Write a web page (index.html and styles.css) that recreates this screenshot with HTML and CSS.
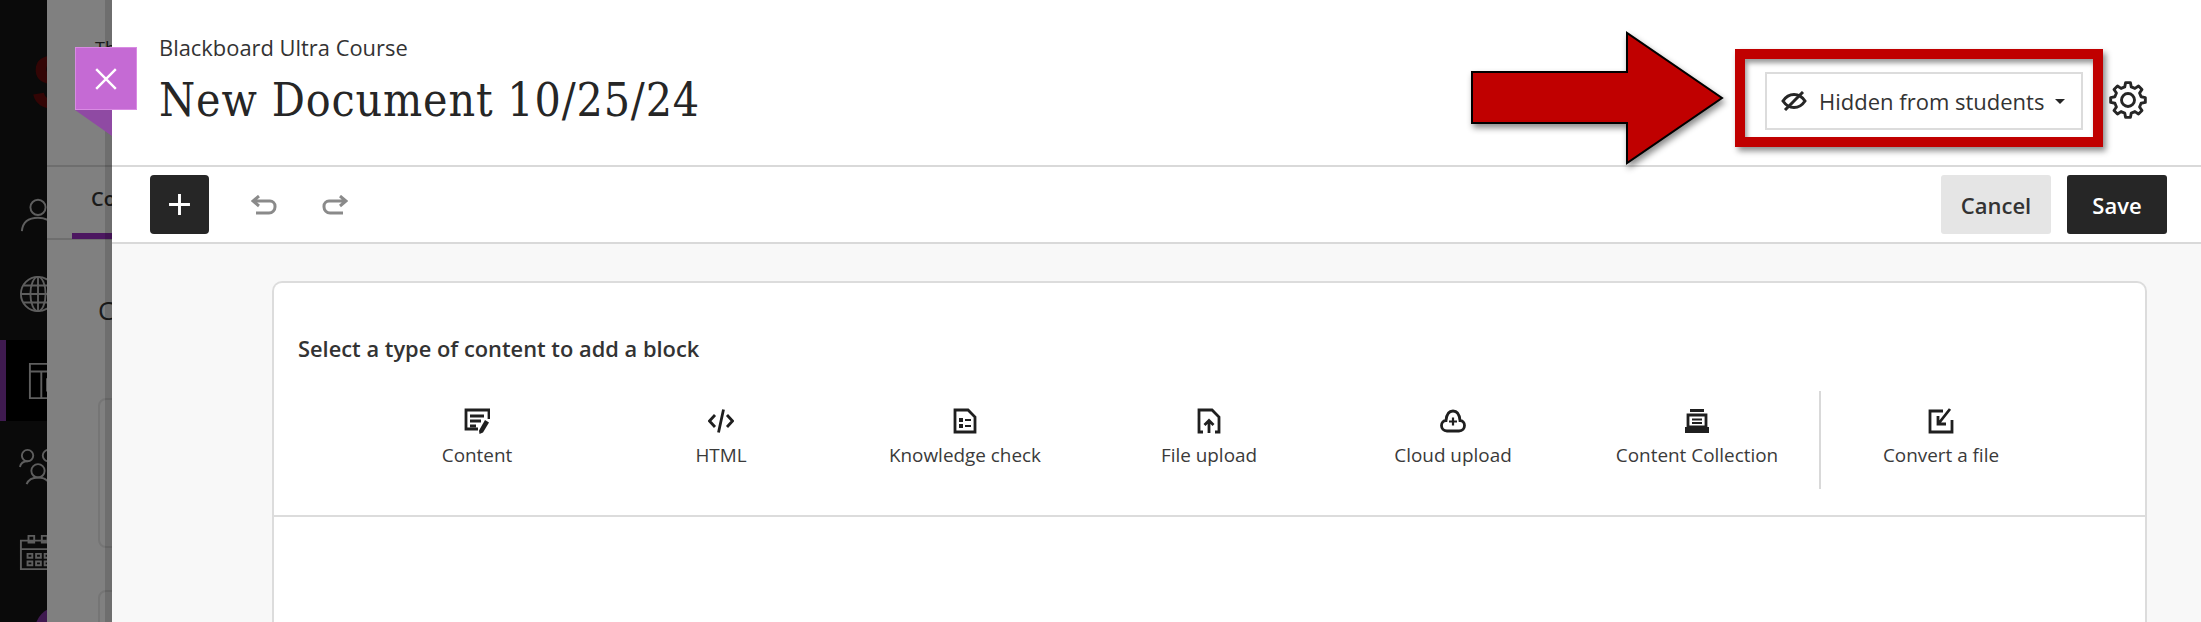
FILE: index.html
```html
<!DOCTYPE html>
<html lang="en">
<head>
<meta charset="utf-8">
<title>New Document 10/25/24</title>
<link rel="stylesheet" href="styles.css">
</head>
<body>
<div class="page">
  <aside class="rail">
    <span class="rail-logo">S</span>
    <svg class="rail-icon rail-person" viewBox="0 0 40 40"><circle cx="20" cy="13" r="8"/><path d="M3 38c1-10 8-14 17-14s16 4 17 14"/></svg>
    <svg class="rail-icon rail-globe" viewBox="0 0 40 40"><circle cx="20" cy="20" r="18"/><ellipse cx="20" cy="20" rx="8" ry="18"/><path d="M2 20h36M5 11h30M5 29h30M20 2v36"/></svg>
    <div class="rail-active">
      <svg class="rail-icon" viewBox="0 0 40 40"><path d="M2 2h36v36H2zM2 10h36M14 10v28M20 18h14v12H20z"/></svg>
    </div>
    <svg class="rail-icon rail-group" viewBox="0 0 40 40"><circle cx="9" cy="8" r="6"/><circle cx="31" cy="8" r="6"/><circle cx="20" cy="24" r="7"/><path d="M1 20c1-5 4-6 8-6M39 20c-1-5-4-6-8-6M8 38c2-5 6-7 12-7s10 2 12 7"/></svg>
    <svg class="rail-icon rail-cal" viewBox="0 0 40 40"><path d="M2 8h36v30H2zM2 17h36M10 3h6v7h-6zM24 3h6v7h-6zM9 22h5v4H9zM18 22h5v4h-5zM27 22h5v4h-5zM9 30h5v4H9zM18 30h5v4h-5zM27 30h5v4h-5z"/></svg>
    <span class="rail-avatar"></span>
  </aside>

  <div class="backdrop">
    <p class="back-crumb">Th</p>
    <div class="back-head">
      <span class="back-tab">Co</span>
    </div>
    <p class="back-title">C</p>
    <div class="back-card"></div>
    <div class="back-card"></div>
    <span class="backdrop-edge"></span>
  </div>

  <main class="panel">
    <header class="panel-head">
      <div class="titles">
        <p class="course">Blackboard Ultra Course</p>
        <h1 class="doc-title">New Document 10/25/24</h1>
      </div>
      <div class="head-actions">
        <button class="visibility" type="button">
          <svg class="eye" viewBox="0 0 26 20"><path d="M2 10c3-4.500 7-6.500 11-6.500S21 5.500 24 10c-3 4.500-7 6.500-11 6.500S5 14.500 2 10z"/><path d="M4 19L22 1"/></svg>
          <span>Hidden from students</span>
          <span class="caret"></span>
        </button>
        <svg class="gear" viewBox="0 0 38 38"><g transform="translate(19 19)"><polygon points="-3.27,-13.1 -2.44,-17.33 2.44,-17.33 3.27,-13.1 6.95,-11.58 10.53,-13.98 13.98,-10.53 11.58,-6.95 13.1,-3.27 17.33,-2.44 17.33,2.44 13.1,3.27 11.58,6.95 13.98,10.53 10.53,13.98 6.95,11.58 3.27,13.1 2.44,17.33 -2.44,17.33 -3.27,13.1 -6.95,11.58 -10.53,13.98 -13.98,10.53 -11.58,6.95 -13.1,3.27 -17.33,2.44 -17.33,-2.44 -13.1,-3.27 -11.58,-6.95 -13.98,-10.53 -10.53,-13.98 -6.95,-11.58"/><circle r="6.500"/></g></svg>
      </div>
    </header>

    <div class="toolbar">
      <div class="tools">
        <button class="add" type="button"><svg viewBox="0 0 22 22"><path d="M11 1v20M1 11h20"/></svg></button>
        <svg class="history" viewBox="0 0 26 20"><path d="M8 1L2 6l6 5M2 6h17a5 5 0 0 1 5 5v1a6 6 0 0 1-6 6H5"/></svg>
        <svg class="history" viewBox="0 0 26 20"><path d="M18 1l6 5-6 5M24 6H7a5 5 0 0 0-5 5v1a6 6 0 0 0 6 6h13"/></svg>
      </div>
      <div class="tools-right">
        <button class="btn btn-cancel" type="button">Cancel</button>
        <button class="btn btn-save" type="button">Save</button>
      </div>
    </div>

    <div class="canvas">
      <section class="card">
        <div class="picker">
          <h2 class="picker-title">Select a type of content to add a block</h2>
          <div class="blocks">
            <div class="block">
              <svg class="block-icon" viewBox="0 0 26 26"><path class="ink" d="M14 21H2V2h23v9"/><path class="ink" d="M6 8h14M6 13h11M6 18h6"/><path class="fill" d="M21 12l4 2.500-6 10-3.500 1.500-.5-3.500z"/></svg>
              <span class="block-label">Content</span>
            </div>
            <div class="block">
              <svg class="block-icon" viewBox="0 0 26 26"><path class="ink" d="M7 7l-5.500 6L7 19M19 7l5.500 6L19 19M15.500 1.500l-5 23"/></svg>
              <span class="block-label">HTML</span>
            </div>
            <div class="block">
              <svg class="block-icon" viewBox="0 0 26 26"><path class="ink" d="M3 2h13l7 7v15H3z"/><path class="fill" d="M7 10h4v4H7zM7 16h4v4H7z"/><path class="ink-thin" d="M13 12h6M13 18h6"/></svg>
              <span class="block-label">Knowledge check</span>
            </div>
            <div class="block">
              <svg class="block-icon" viewBox="0 0 26 26"><path class="ink" d="M7 24H3V2h13l7 7v15h-4"/><path class="ink" d="M13 25V13M8.500 17l4.500-4.500 4.500 4.500"/></svg>
              <span class="block-label">File upload</span>
            </div>
            <div class="block">
              <svg class="block-icon" viewBox="0 0 26 26"><path class="ink" d="M7 23c-3.500 0-5.500-2.500-5.500-5.500S3.500 12.500 6 12.500C6.500 7 9 3 13 3s6.500 4 7 9.500c2.500 0 4.500 2 4.500 5s-2 5.500-5.500 5.500z"/><path class="ink-thin" d="M13 9.500v8M9 13.500h8"/></svg>
              <span class="block-label">Cloud upload</span>
            </div>
            <div class="block">
              <svg class="block-icon" viewBox="0 0 26 26"><path class="ink" d="M6 2.500h14M4 7h18v12H4z"/><path class="ink-thin" d="M8 11.500h10M8 15h10"/><path class="fill" d="M1 19h24v6H1z"/></svg>
              <span class="block-label">Content Collection</span>
            </div>
            <div class="block block-split">
              <svg class="block-icon" viewBox="0 0 26 26"><path class="ink" d="M15 3H2v21h22V12"/><path class="ink" d="M22 1L11 15M10 8v8h8"/></svg>
              <span class="block-label">Convert a file</span>
            </div>
          </div>
        </div>
      </section>
    </div>
  </main>

  <button class="close" type="button" aria-label="Close"><svg viewBox="0 0 22 22"><path d="M2 2l18 18M20 2L2 20"/></svg></button>
  <span class="close-fold"></span>

  <div class="callout-box"></div>
  <svg class="callout-arrow" viewBox="0 0 270 150"><polygon points="6,44 161,44 161,5 256,70 161,135 161,95 6,95"/></svg>
</div>
</body>
</html>
```
FILE: styles.css
```css
* { box-sizing: border-box; }
html, body { margin: 0; padding: 0; }
body { font-family: "Open Sans", "Noto Sans", sans-serif; color: #262626; background: #fff; }
p, h1, h2 { margin: 0; }
button { font-family: inherit; cursor: pointer; }

.page { position: relative; display: flex; width: 2201px; height: 622px; overflow: hidden; }

/* dimmed course page behind the panel */
.rail { position: relative; flex: 0 0 47px; display: flex; flex-direction: column; padding-top: 195px; overflow: hidden; background: #0a0a0a; }
.rail-logo { position: absolute; left: 31px; top: 44px; font: 700 76px/76px "Liberation Sans", sans-serif; color: #330505; }
.rail-icon { flex: none; display: block; width: 38px; height: 38px; margin-left: 19px; fill: none; stroke: #5e5e5e; stroke-width: 2; }
.rail-globe { margin-top: 42px; }
.rail-active { flex: none; display: flex; align-items: center; height: 81px; margin-top: 27px; border-left: 6px solid #3f1a50; background: #000; }
.rail-active .rail-icon { margin-left: 22px; }
.rail-group { margin-top: 27px; }
.rail-cal { margin-top: 47px; }
.rail-avatar { flex: none; width: 46px; height: 46px; margin: 36px 0 0 35px; border-radius: 50%; background: #3f1a50; }

.backdrop { position: relative; flex: 0 0 65px; overflow: hidden; background: #808080; color: #1a1a1a; }
.back-crumb { position: absolute; left: 48px; top: 36px; font-size: 18px; line-height: 24px; }
.back-head { height: 240px; border-bottom: 2px solid #6e6e6e; }
.back-head::before { content: ""; position: absolute; left: 0; right: 0; top: 165px; height: 2px; background: #6e6e6e; }
.back-tab { position: absolute; left: 25px; top: 166px; display: block; width: 90px; height: 73px; padding: 19px 0 0 19px; border-bottom: 6px solid #4c1760; font-size: 20px; font-weight: 600; line-height: 28px; white-space: nowrap; }
.back-title { margin: 50px 0 0 51px; font-size: 26px; line-height: 40px; white-space: nowrap; }
.back-card { width: 200px; height: 150px; margin: 68px 0 0 51px; border: 2px solid #757575; border-radius: 8px; }
.back-card + .back-card { margin-top: 42px; }
.backdrop-edge { position: absolute; top: 0; right: 0; bottom: 0; width: 7px; background: rgba(0, 0, 0, .14); }

/* document panel */
.panel { flex: 1; display: flex; flex-direction: column; min-width: 0; background: #fff; }
.panel-head { flex: none; display: flex; align-items: flex-start; justify-content: space-between; height: 167px; padding: 34px 54px 0 47px; border-bottom: 2px solid #d9d9d9; }
.course { font-size: 21.900px; line-height: 27px; color: #333; }
.doc-title { margin-top: 11px; font-family: "DejaVu Serif", "Liberation Serif", serif; font-stretch: condensed; font-size: 46px; font-weight: 400; letter-spacing: .85px; line-height: 56px; color: #262626; white-space: nowrap; }
.head-actions { display: flex; align-items: flex-start; gap: 26px; }
.visibility { display: flex; align-items: center; width: 318px; height: 58px; margin-top: 38px; padding: 0 0 0 14px; border: 2px solid #dcdcdc; background: #fff; color: #333; font-size: 22px; }
.eye { flex: none; width: 26px; height: 20px; margin-right: 12px; fill: none; stroke: #262626; stroke-width: 3; }
.caret { flex: none; width: 0; height: 0; margin-left: 11px; border-style: solid; border-width: 5px 5px 0; border-color: #262626 transparent transparent; }
.gear { flex: none; width: 38px; height: 38px; margin-top: 47px; fill: none; stroke: #262626; stroke-width: 2.900; stroke-linejoin: round; overflow: visible; }

.toolbar { flex: none; display: flex; align-items: center; justify-content: space-between; height: 77px; padding: 0 34px 0 38px; border-bottom: 2px solid #d9d9d9; }
.tools { display: flex; align-items: center; }
.add { display: flex; align-items: center; justify-content: center; width: 59px; height: 59px; margin-right: 42px; padding: 0; border: 0; border-radius: 4px; background: #262626; }
.add svg { width: 23px; height: 23px; fill: none; stroke: #fff; stroke-width: 2.800; }
.history { width: 26px; height: 20px; margin-right: 45px; fill: none; stroke: #8a8a8a; stroke-width: 3; }
.tools-right { display: flex; gap: 16px; }
.btn { height: 59px; padding: 0; border: 0; border-radius: 3px; font-size: 22px; font-weight: 600; }
.btn-cancel { width: 110px; background: #e5e5e5; color: #333; }
.btn-save { width: 100px; background: #262626; color: #fff; }

.canvas { flex: 1; min-height: 0; overflow: hidden; padding: 37px 54px 0 160px; background: #f8f8f8; }
.card { height: 420px; border: 2px solid #dcdcdc; border-bottom: 0; border-radius: 10px 10px 0 0; background: #fff; }
.picker { height: 234px; padding: 52px 0 0 24px; border-bottom: 2px solid #dcdcdc; }
.picker-title { font-size: 21.850px; font-weight: 600; line-height: 28px; color: #333; }
.blocks { display: flex; height: 97px; margin: 29px 0 0 57px; }
.block { flex: 0 0 244px; display: flex; flex-direction: column; align-items: center; padding-top: 16px; }
.block-split { margin-top: -1px; padding: 17px 2px 0 0; border-left: 2px solid #d9d9d9; }
.block-icon { flex: none; width: 26px; height: 26px; }
.block-icon .ink { fill: none; stroke: #1f1f1f; stroke-width: 2.800; }
.block-icon .ink-thin { fill: none; stroke: #1f1f1f; stroke-width: 2.200; }
.block-icon .fill { fill: #1f1f1f; }
.block-label { margin-top: 9px; font-size: 18.900px; line-height: 24px; color: #3a3a3a; white-space: nowrap; }

/* overlays */
.close { position: absolute; left: 75px; top: 47px; display: flex; align-items: center; justify-content: center; width: 62px; height: 63px; padding: 0; border: 1px solid #d98be3; background: #c56ad4; }
.close svg { width: 24px; height: 24px; fill: none; stroke: #fff; stroke-width: 2.200; }
.close-fold { position: absolute; left: 75px; top: 110px; width: 37px; height: 26px; background: #8f4aa3; clip-path: polygon(0 0, 100% 0, 100% 100%); }
.callout-box { position: absolute; left: 1735px; top: 49px; width: 368px; height: 98px; border: 10px solid #c00000; box-shadow: 3px 4px 6px rgba(0, 0, 0, .45), inset 2px 4px 5px rgba(0, 0, 0, .4); pointer-events: none; }
.callout-arrow { position: absolute; left: 1466px; top: 28px; width: 270px; height: 150px; overflow: visible; filter: drop-shadow(2px 4px 3px rgba(0, 0, 0, .45)); }
.callout-arrow polygon { fill: #c00000; stroke: #000; stroke-width: 2; }
```
